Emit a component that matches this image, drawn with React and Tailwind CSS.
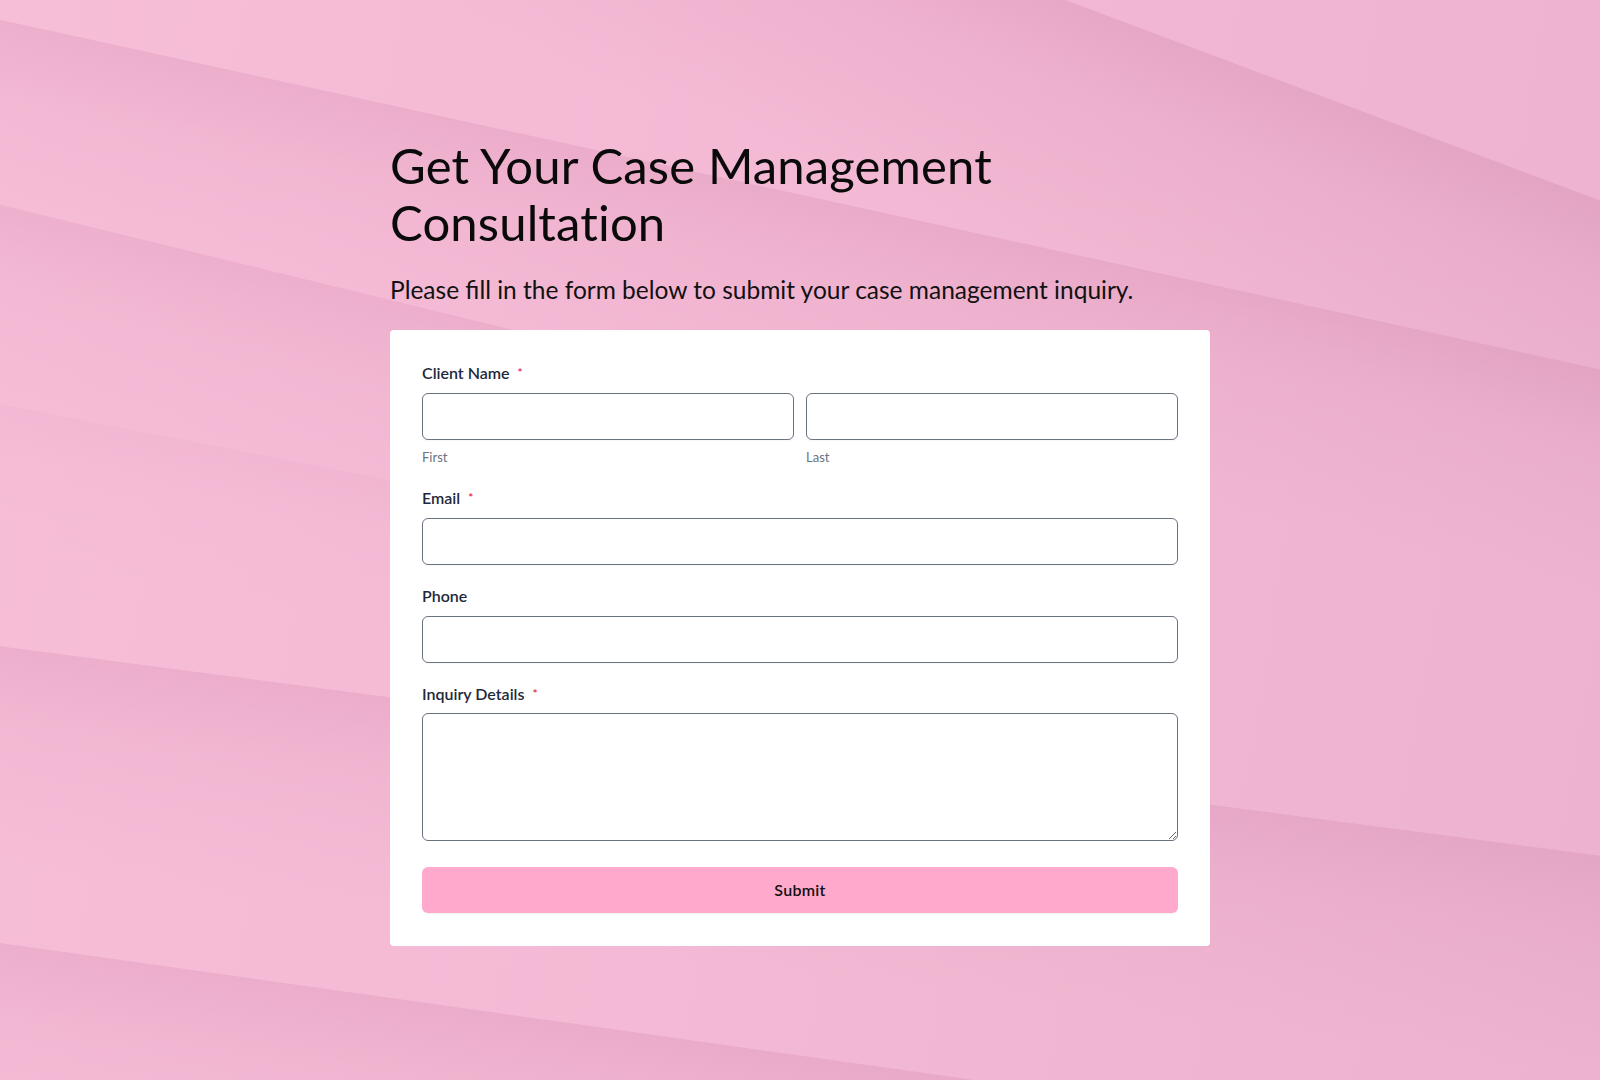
import { useId } from "react"

// streak edges of the pink backdrop: [x0, y0, x1, y1, depth, strength]
const streaks = [
    [-900, -737, 1900, 313, 240, 0.24],
    [-200, -24, 1900, 435, 220, 0.2],
    [-200, 156, 1210, 500, 240, 0.17],
    [-200, 365, 1210, 640, 150, 0.06],
    [-200, 620, 1900, 895, 220, 0.2],
    [-200, 915, 1900, 1210, 220, 0.2],
]

function Band({ line, idx }) {
    const base = useId().replace(/:/g, "")
    const [x0, y0, x1, y1, depth, strength] = line
    const len = Math.hypot(x1 - x0, y1 - y0)
    const nx = -(y1 - y0) / len
    const ny = (x1 - x0) / len
    // normal pointing downwards
    const sx = ny < 0 ? -nx : nx
    const sy = ny < 0 ? -ny : ny
    const pts = [
        [x0, y0],
        [x1, y1],
        [x1 + sx * depth, y1 + sy * depth],
        [x0 + sx * depth, y0 + sy * depth],
    ].map(p => p.join(",")).join(" ")
    const id = `band-${base}-${idx}`
    return (
        <>
            <defs>
                <linearGradient id={id} gradientUnits="userSpaceOnUse" x1={x0} y1={y0} x2={x0 + sx * depth} y2={y0 + sy * depth}>
                    <stop offset="0" stopColor="#c4749f" stopOpacity={strength} />
                    <stop offset="0.35" stopColor="#c4749f" stopOpacity={strength * 0.4} />
                    <stop offset="1" stopColor="#c4749f" stopOpacity="0" />
                </linearGradient>
            </defs>
            <polygon points={pts} fill={`url(#${id})`} />
        </>
    )
}

function Backdrop() {
    return (
        <svg className="absolute inset-0 w-full h-full" viewBox="0 0 1600 1080" preserveAspectRatio="none">
            {streaks.map((s, i) => <Band key={i} line={s} idx={i} />)}
        </svg>
    )
}

function Label({ children, required, className = "mb-2.5" }) {
    return (
        <label className={`flex items-center h-5 text-[16px] leading-5 font-semibold text-[#1e293b] ${className}`}>
            {children}
            {required && <span className="ml-2 text-[12px] text-[#e11d48]">*</span>}
        </label>
    )
}

const inputCls = "block w-full h-[47px] rounded-md border border-[#6b7280] bg-white px-3 text-[15px] outline-none shadow-[0_1px_2px_rgba(0,0,0,0.04)]"

export default function App() {
    return (
        <div className="relative min-h-screen overflow-hidden bg-[linear-gradient(100deg,#f7bed8_0%,#f4b9d4_45%,#ecb2ce_100%)]" style={{ fontFamily: "Lato, 'Open Sans', sans-serif" }}>
            <Backdrop />
            <main className="relative z-10 w-[820px] mx-auto pt-[137px] pb-[134px]">
                <h1 className="text-[49px] leading-[57px] font-normal text-[#0a0a0a] w-[660px] tracking-[0.15px]">
                    Get Your Case Management Consultation
                </h1>
                <p className="mt-[23px] text-[24.5px] leading-8 text-[#111111]">
                    Please fill in the form below to submit your case management inquiry.
                </p>
                <form className="mt-6 bg-white rounded-[4px] px-8 pt-[33px] pb-[33px]" onSubmit={e => e.preventDefault()}>
                    <div>
                        <Label required>Client Name</Label>
                        <div className="grid grid-cols-2 gap-3">
                            <div>
                                <input className={inputCls} type="text" />
                                <span className="block mt-[9px] text-[13px] leading-4 text-[#6b7280]">First</span>
                            </div>
                            <div>
                                <input className={inputCls} type="text" />
                                <span className="block mt-[9px] text-[13px] leading-4 text-[#6b7280]">Last</span>
                            </div>
                        </div>
                    </div>
                    <div className="mt-[23px]">
                        <Label required>Email</Label>
                        <input className={inputCls} type="email" />
                    </div>
                    <div className="mt-[21px]">
                        <Label>Phone</Label>
                        <input className={inputCls} type="tel" />
                    </div>
                    <div className="mt-[21px]">
                        <Label required className="mb-[9px]">Inquiry Details</Label>
                        <textarea className="block w-full h-[128px] rounded-md border border-[#6b7280] bg-white px-3 py-2 text-[15px] outline-none" />
                    </div>
                    <button type="submit" className="mt-[26px] w-full h-[46px] rounded-md bg-[#ffaacd] text-[16px] font-semibold tracking-[0.3px] text-[#111111] shadow-[0_1px_2px_rgba(0,0,0,0.06)]">
                        Submit
                    </button>
                </form>
            </main>
        </div>
    )
}
